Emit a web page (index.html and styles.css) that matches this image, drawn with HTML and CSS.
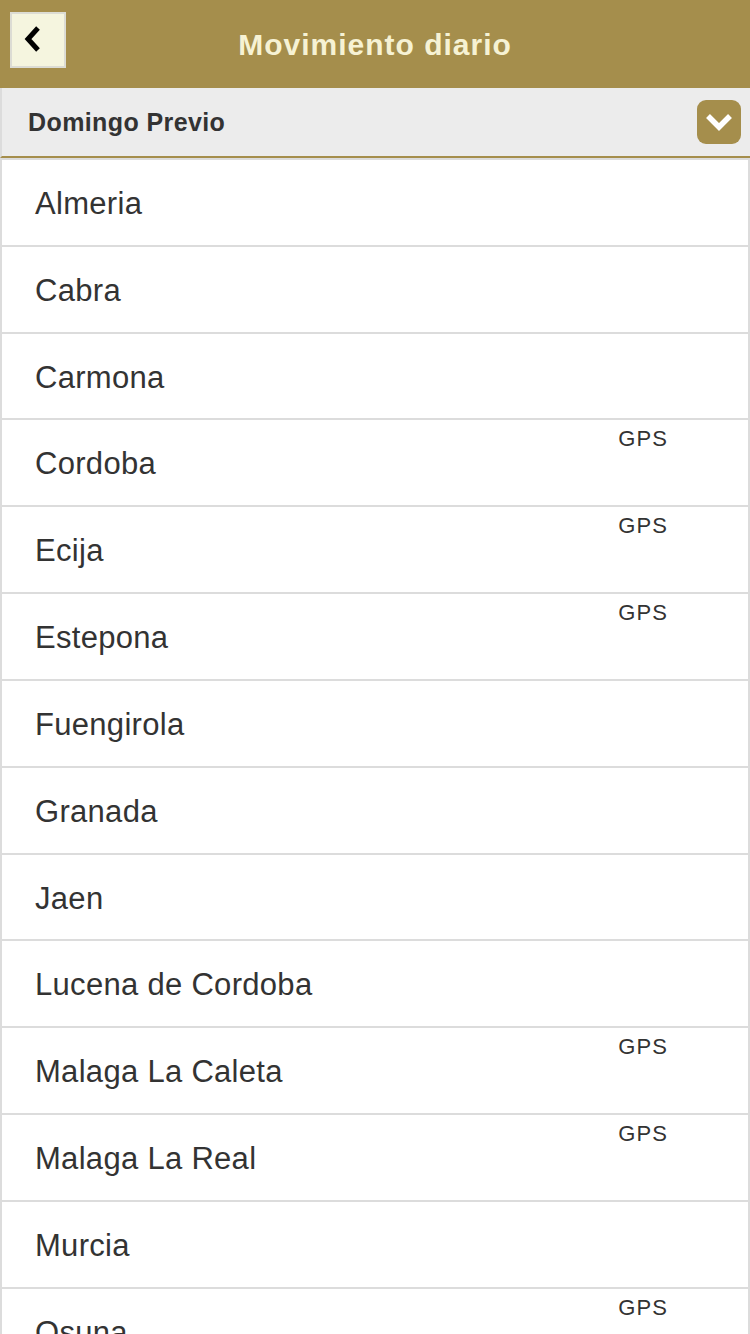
FILE: index.html
```html
<!DOCTYPE html>
<html lang="es">
<head>
<meta charset="utf-8">
<title>Movimiento diario</title>
<link rel="stylesheet" href="styles.css">
</head>
<body>
<header class="topbar">
  <button class="back-btn" aria-label="Volver">
    <svg width="22" height="28" viewBox="0 0 22 28"><polyline points="16,3 6,14 16,25" fill="none" stroke="#000" stroke-width="5" stroke-linejoin="miter"/></svg>
  </button>
  <h1 class="title">Movimiento diario</h1>
</header>
<div class="subbar">
  <span class="subbar-label">Domingo Previo</span>
  <span class="dropdown-btn">
    <svg width="30" height="20" viewBox="0 0 30 20"><polyline points="4,4 15,15 26,4" fill="none" stroke="#fff" stroke-width="5.5"/></svg>
  </span>
</div>
<ul class="list">
  <li class="row"><span class="name">Almeria</span></li>
  <li class="row"><span class="name">Cabra</span></li>
  <li class="row"><span class="name">Carmona</span></li>
  <li class="row"><span class="name">Cordoba</span><span class="gps">GPS</span></li>
  <li class="row"><span class="name">Ecija</span><span class="gps">GPS</span></li>
  <li class="row"><span class="name">Estepona</span><span class="gps">GPS</span></li>
  <li class="row"><span class="name">Fuengirola</span></li>
  <li class="row"><span class="name">Granada</span></li>
  <li class="row"><span class="name">Jaen</span></li>
  <li class="row"><span class="name">Lucena de Cordoba</span></li>
  <li class="row"><span class="name">Malaga La Caleta</span><span class="gps">GPS</span></li>
  <li class="row"><span class="name">Malaga La Real</span><span class="gps">GPS</span></li>
  <li class="row"><span class="name">Murcia</span></li>
  <li class="row"><span class="name">Osuna</span><span class="gps">GPS</span></li>
</ul>
</body>
</html>
```
FILE: styles.css
```css
* { box-sizing: border-box; }
html, body {
  margin: 0;
  padding: 0;
  background: #fff;
  font-family: "Liberation Sans", Arial, Helvetica, sans-serif;
  overflow: hidden;
  height: 1334px;
}
.topbar {
  height: 88px;
  background: #a58e4c;
  display: flex;
  align-items: center;
  position: relative;
  padding-left: 10px;
}
.back-btn {
  width: 56px;
  height: 56px;
  margin: 0;
  padding: 0;
  background: #f5f5df;
  border: 2px solid #dcdcd4;
  display: flex;
  align-items: center;
  justify-content: center;
  margin-top: -8px;
}
.back-btn svg { margin-left: -10px; margin-top: -2px; }
.title {
  position: absolute;
  left: 0;
  right: 0;
  top: 27px;
  margin: 0;
  text-align: center;
  font-size: 30px;
  font-weight: bold;
  letter-spacing: 1px;
  color: #f6f2d4;
  line-height: 36px;
  pointer-events: none;
}
.subbar {
  height: 70px;
  background: #ececec;
  border-left: 2px solid #dcdcdc;
  border-bottom: 2px solid #a58e4c;
  display: flex;
  align-items: center;
  justify-content: space-between;
  padding-left: 26px;
  padding-right: 9px;
}
.subbar-label {
  font-size: 25px;
  font-weight: bold;
  letter-spacing: 0.4px;
  color: #333;
  margin-top: 1px;
}
.dropdown-btn {
  width: 44px;
  height: 44px;
  border-radius: 9px;
  background: #a58e4c;
  display: flex;
  align-items: center;
  justify-content: center;
}
.list {
  list-style: none;
  margin: 0;
  padding: 0;
  border-top: 2px solid #dcdcdc;
  border-left: 2px solid #dcdcdc;
  border-right: 2px solid #dcdcdc;
}
.row {
  position: relative;
  height: 86.83px;
  border-bottom: 2px solid #dcdcdc;
  display: flex;
  align-items: center;
  padding-left: 33px;
}
.name {
  font-size: 31px;
  letter-spacing: 0.3px;
  color: #333;
  margin-top: 3px;
}
.gps {
  position: absolute;
  top: 6px;
  right: 80px;
  font-size: 22px;
  letter-spacing: 1.1px;
  color: #333;
}
```
